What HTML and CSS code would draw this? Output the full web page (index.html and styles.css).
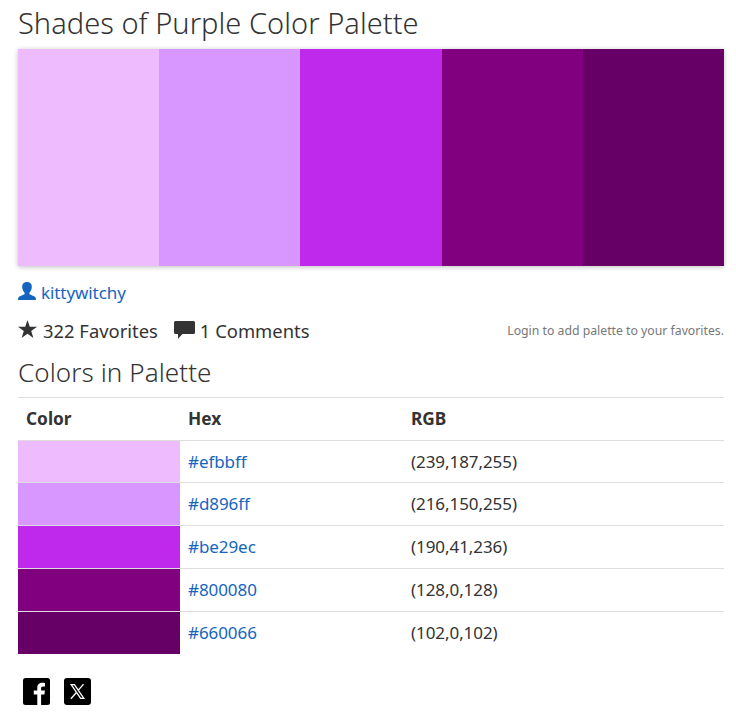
FILE: index.html
```html
<!DOCTYPE html>
<html lang="en">
<head>
<meta charset="utf-8">
<title>Shades of Purple Color Palette</title>
<link rel="stylesheet" href="styles.css">
</head>
<body>
<main>
<h1>Shades of Purple Color Palette</h1>
<div class="palette"><i class="c1"></i><i class="c2"></i><i class="c3"></i><i class="c4"></i><i class="c5"></i></div>
<a class="user" href="#"><svg width="18" height="18" viewBox="0 0 18 18"><path fill="currentColor" d="M9 0C6 0 4.200 1.600 4.200 4.600c0 2.600.8 4.500 2.200 5.800.5.700.4 1.700-.5 2.100L1.500 14.400C.4 15 0 15.800 0 18h18c0-2.200-.4-3-1.500-3.600l-4.400-1.900c-.9-.4-1-1.400-.5-2.100 1.400-1.300 2.200-3.200 2.200-5.800C13.800 1.600 12 0 9 0z"/></svg><span>kittywitchy</span></a>
<div class="stats">
<span class="fav"><svg width="19" height="18" viewBox="0 0 19 18"><path fill="currentColor" d="M9.500 0l2.300 6.700H19l-5.800 4.300 2.200 7-5.900-4.200L3.600 18l2.200-7L0 6.700h7.200z"/></svg><span>322 Favorites</span></span>
<span class="com"><svg width="21" height="18" viewBox="0 0 21 18"><path fill="currentColor" d="M1.500 0h18A1.500 1.500 0 0 1 21 1.500v10a1.500 1.500 0 0 1-1.500 1.500H8.500L4 17.700V13H1.500A1.500 1.500 0 0 1 0 11.500v-10A1.500 1.500 0 0 1 1.500 0z"/></svg><span>1 Comments</span></span>
<small>Login to add palette to your favorites.</small>
</div>
<h2>Colors in Palette</h2>
<table>
<thead><tr><th class="col-color">Color</th><th class="col-hex">Hex</th><th>RGB</th></tr></thead>
<tbody>
<tr class="short"><td class="c1"></td><td><a href="#">#efbbff</a></td><td>(239,187,255)</td></tr>
<tr><td class="c2"></td><td><a href="#">#d896ff</a></td><td>(216,150,255)</td></tr>
<tr><td class="c3"></td><td><a href="#">#be29ec</a></td><td>(190,41,236)</td></tr>
<tr><td class="c4"></td><td><a href="#">#800080</a></td><td>(128,0,128)</td></tr>
<tr class="last"><td class="c5"></td><td><a href="#">#660066</a></td><td>(102,0,102)</td></tr>
</tbody>
</table>
<div class="share">
<svg width="27" height="27" viewBox="0 0 27 27"><rect width="27" height="27" rx="2.500"/><path fill="#fff" d="M14.300 27V16.500h-3.500v-4h3.500V9.800c0-3.500 2.100-5 5-5 1.300 0 2.200.1 2.700.2v3.500h-1.900c-1.700 0-2 .8-2 2v2h3.800l-.5 4h-3.300V27z"/></svg>
<svg width="27" height="27" viewBox="0 0 27 27"><rect width="27" height="27" rx="3"/><path fill="none" stroke="#fff" stroke-width="1.300" d="M7.200 6.700h3.200l9.400 13.600h-3.200zM19.500 6.200l-5.400 6.200M12.400 14.500l-5.500 6.300"/></svg>
</div>
</main>
</body>
</html>
```
FILE: styles.css
```css
* { box-sizing: border-box; }
body { margin: 0; background: #fff; color: #333; font: 17px/26px "Noto Sans", sans-serif; }
main { padding: 4px 12px 0 18px; }
a { color: #1565c0; text-decoration: none; }
svg { display: block; flex: none; }
h1, h2 { margin: 0; font-weight: 300; white-space: nowrap; }
h1 { font-size: 29px; line-height: 38px; height: 45px; letter-spacing: .04px; }
.palette { display: flex; height: 217px; box-shadow: 0 1px 5px rgba(0,0,0,.25); }
.palette i { flex: 1; }
.c1 { background: #efbbff; }
.c2 { background: #d896ff; }
.c3 { background: #be29ec; }
.c4 { background: #800080; }
.c5 { background: #660066; }
.user { display: flex; gap: 5px; margin-top: 13px; height: 26px; align-items: center; }
.user svg { margin-bottom: 2px; }
.user span { padding-top: 1px; letter-spacing: -.08px; }
.stats { display: flex; align-items: center; margin-top: 13px; height: 26px; }
.fav, .com { display: flex; align-items: center; gap: 6px; font-size: 18.400px; }
.fav svg { margin-bottom: 4px; }
.com { margin-left: 16px; gap: 5px; }
.com svg { margin-bottom: 2px; }
small { margin-left: auto; font-size: 12.250px; color: #777; white-space: nowrap; }
h2 { font-size: 26px; line-height: 36px; height: 53px; padding-top: 10px; letter-spacing: .08px; }
table { width: 100%; border-collapse: collapse; table-layout: fixed; }
th, td { height: 43px; padding: 0 8px 1px; text-align: left; border-top: 1px solid #ddd; }
th { font-size: 17.300px; }
td { letter-spacing: -.07px; }
.short td { height: 42px; padding-bottom: 0; }
.last td { height: 42px; padding-bottom: 0; }
.col-color { width: 162px; }
.col-hex { width: 223px; }
.share { display: flex; gap: 14px; margin: 24px 0 0 4.500px; }
```
